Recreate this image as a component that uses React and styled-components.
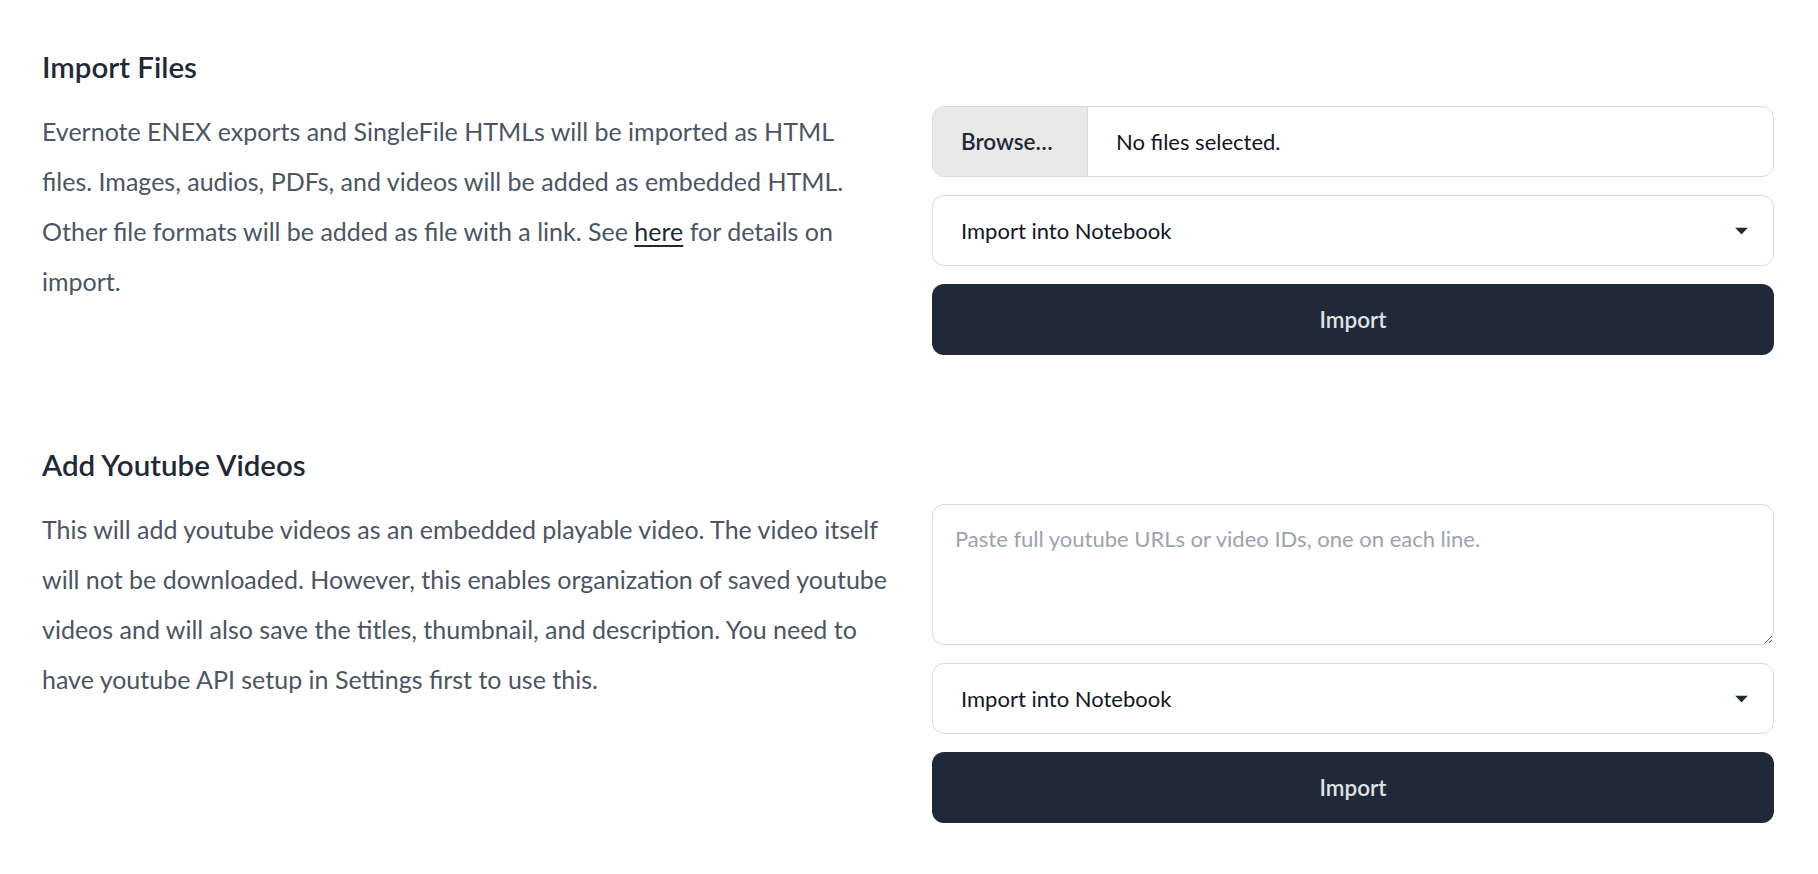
import React from 'react';
import styled, { createGlobalStyle } from 'styled-components';

const GlobalStyle = createGlobalStyle`
  body {
    margin: 0;
    background: #ffffff;
    font-family: Lato, "Noto Sans", sans-serif;
  }
  * {
    box-sizing: border-box;
  }
`;

const Page = styled.main`
  padding: 47px 44px 40px 42px;
`;

const Section = styled.section`
  & + & {
    margin-top: 90px;
  }
`;

const Heading = styled.h2`
  margin: 0 0 19px;
  font-size: 29.5px;
  line-height: 40px;
  font-weight: 600;
  color: #1f2937;
`;

const Grid = styled.div`
  display: grid;
  grid-template-columns: 1fr 842px;
  column-gap: 38px;
  align-items: start;
`;

const Description = styled.p`
  margin: 0;
  font-size: 25px;
  line-height: 50px;
  color: #4b5563;
`;

const Link = styled.a`
  color: #1f2937;
  text-decoration: underline;
  text-underline-offset: 4px;
`;

const Controls = styled.div`
  display: flex;
  flex-direction: column;
  gap: 18px;
`;

const FileField = styled.label`
  display: flex;
  align-items: stretch;
  height: 71px;
  border: 1px solid #dadada;
  border-radius: 12px;
  overflow: hidden;
  cursor: pointer;
`;

const BrowseButton = styled.span`
  display: flex;
  align-items: center;
  width: 155px;
  padding-left: 28px;
  background: #e9e9e9;
  border-right: 1px solid #dadada;
  font-size: 22.5px;
  font-weight: 600;
  color: #1f2937;
`;

const FileStatus = styled.span`
  display: flex;
  align-items: center;
  padding-left: 28px;
  font-size: 22px;
  color: #111827;
`;

const SelectWrap = styled.div`
  position: relative;
`;

const Select = styled.select`
  width: 100%;
  height: 71px;
  padding: 0 60px 0 28px;
  border: 1px solid #dadada;
  border-radius: 12px;
  background: #ffffff;
  appearance: none;
  font-family: inherit;
  font-size: 22px;
  color: #111827;
`;

const Caret = styled.svg`
  position: absolute;
  right: 26px;
  top: 50%;
  width: 13px;
  height: 7px;
  transform: translateY(-50%);
  pointer-events: none;
`;

const TextArea = styled.textarea`
  display: block;
  width: 100%;
  height: 141px;
  padding: 20px 22px;
  border: 1px solid #dadada;
  border-radius: 12px;
  resize: vertical;
  font-family: inherit;
  font-size: 22px;
  line-height: 28px;
  color: #111827;

  &::placeholder {
    color: #9ca3af;
  }
`;

const ImportButton = styled.button`
  height: 71px;
  border: none;
  border-radius: 12px;
  background: #1f2937;
  font-family: inherit;
  font-size: 22.5px;
  font-weight: 600;
  color: #dfe2e7;
  cursor: pointer;
`;

const NotebookSelect = () => (
  <SelectWrap>
    <Select defaultValue="">
      <option value="">Import into Notebook</option>
    </Select>
    <Caret viewBox="0 0 13 7">
      <path d="M0 0h13L6.5 7z" fill="#1f2937" />
    </Caret>
  </SelectWrap>
);

export default function App() {
  return (
    <Page>
      <GlobalStyle />
      <Section>
        <Heading>Import Files</Heading>
        <Grid>
          <Description>
            Evernote ENEX exports and SingleFile HTMLs will be imported as HTML
            <br />
            files. Images, audios, PDFs, and videos will be added as embedded HTML.
            <br />
            Other file formats will be added as file with a link. See{' '}
            <Link href="#">here</Link> for details on
            <br />
            import.
          </Description>
          <Controls>
            <FileField>
              <BrowseButton>Browse…</BrowseButton>
              <FileStatus>No files selected.</FileStatus>
            </FileField>
            <NotebookSelect />
            <ImportButton>Import</ImportButton>
          </Controls>
        </Grid>
      </Section>

      <Section>
        <Heading>Add Youtube Videos</Heading>
        <Grid>
          <Description>
            This will add youtube videos as an embedded playable video. The video itself
            <br />
            will not be downloaded. However, this enables organization of saved youtube
            <br />
            videos and will also save the titles, thumbnail, and description. You need to
            <br />
            have youtube API setup in Settings first to use this.
          </Description>
          <Controls>
            <TextArea placeholder="Paste full youtube URLs or video IDs, one on each line." />
            <NotebookSelect />
            <ImportButton>Import</ImportButton>
          </Controls>
        </Grid>
      </Section>
    </Page>
  );
}
